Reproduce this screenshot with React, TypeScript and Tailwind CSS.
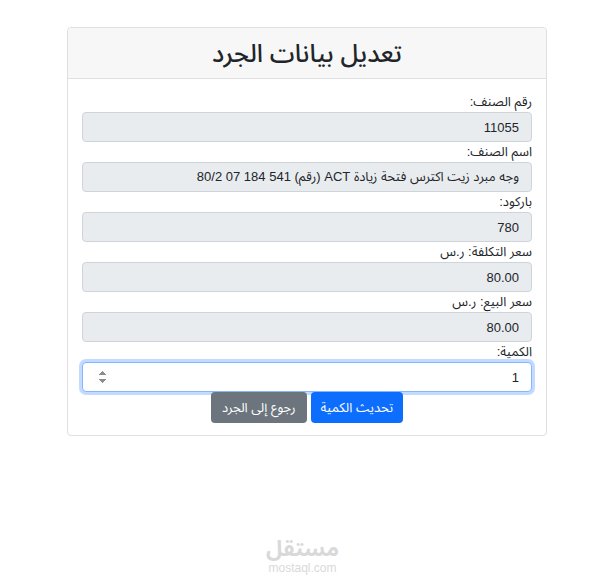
import React from 'react';

const fields = [
  { label: 'رقم الصنف:', value: '11055' },
  { label: 'اسم الصنف:', value: 'وجه مبرد زيت اكترس فتحة زيادة ACT (رقم) 541 184 07 80/2' },
  { label: 'باركود:', value: '780' },
  { label: 'سعر التكلفة: ر.س', value: '80.00' },
  { label: 'سعر البيع: ر.س', value: '80.00' },
];

export default function App() {
  return (
    <div
      dir="rtl"
      className="relative min-h-[586px] bg-white text-[#212529] pt-[27px]"
      style={{ fontFamily: '"Segoe UI", "Liberation Sans", "Noto Sans Arabic", "DejaVu Sans", sans-serif' }}
    >
      <div className="mr-[58px] w-[480px] rounded border border-[#dfdfdf] bg-white">
        <div className="h-[51px] flex items-center justify-center border-b border-[#dfdfdf] bg-[#f7f7f7] rounded-t">
          <h1 className="text-[25px] leading-none font-medium">تعديل بيانات الجرد</h1>
        </div>
        <div className="p-3.5 pt-[13px] pb-[12px]">
          {fields.map((f) => (
            <div key={f.label}>
              <label className="block text-[13px] leading-5">{f.label}</label>
              <input
                readOnly
                value={f.value}
                className="block w-full h-[30px] px-3 rounded border border-[#ced4da] bg-[#e9ecef] text-[13px] text-[#212529] outline-none"
              />
            </div>
          ))}
          <label className="block text-[13px] leading-5">الكمية:</label>
          <input
            type="number"
            defaultValue={1}
            autoFocus
            className="block w-full h-[30px] px-3 rounded border border-[#86b7fe] bg-white text-[13px] text-[#212529] outline-none ring-[3px] ring-[#0d6efd]/25"
          />
          <div className="flex justify-center gap-1">
            <button className="h-[31px] px-[10px] rounded bg-[#0d6efd] text-white text-[13px]">تحديث الكمية</button>
            <button className="h-[31px] px-[11px] rounded bg-[#6c757d] text-white text-[13px]">رجوع إلى الجرد</button>
          </div>
        </div>
      </div>
      <div className="absolute left-0 right-0 top-[536px] flex flex-col items-center text-[#d9d9d9]">
        <span className="text-[22px] leading-[26px] font-bold">مستقل</span>
        <span dir="ltr" className="text-[12px] leading-[13px] font-medium">mostaql.com</span>
      </div>
    </div>
  );
}
